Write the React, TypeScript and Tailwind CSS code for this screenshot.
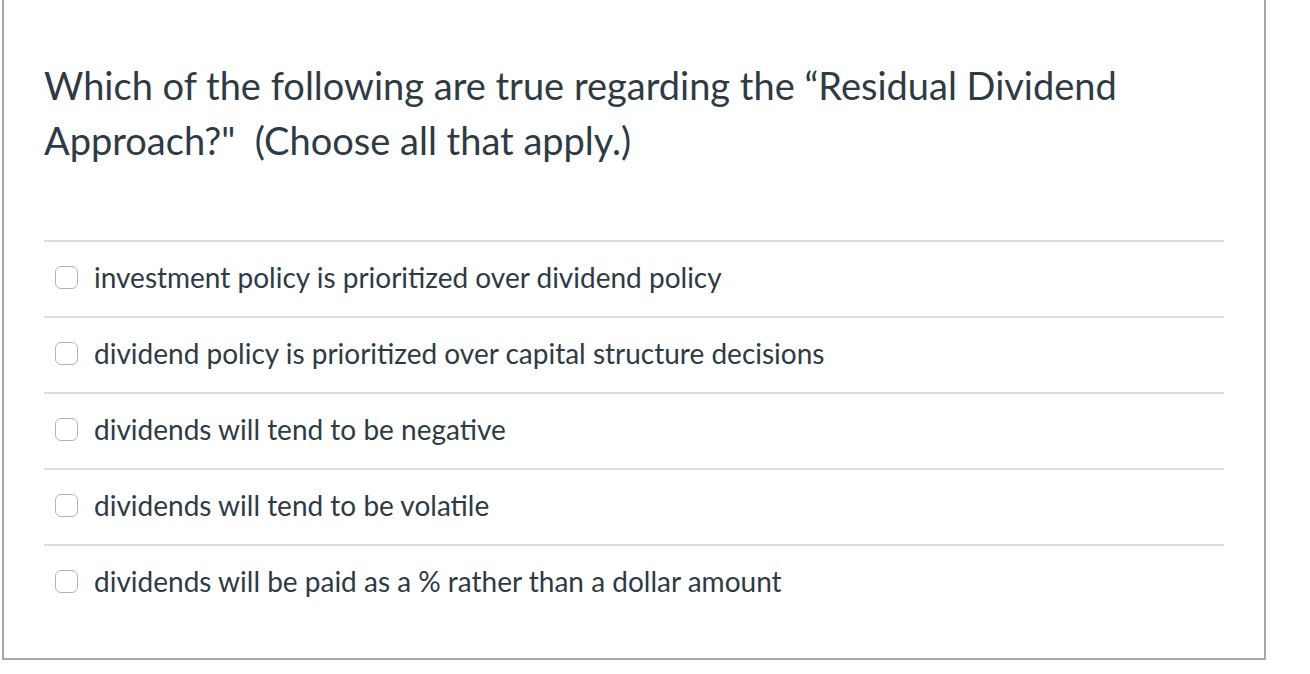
const OPTIONS = [
  'investment policy is prioritized over dividend policy',
  'dividend policy is prioritized over capital structure decisions',
  'dividends will tend to be negative',
  'dividends will tend to be volatile',
  'dividends will be paid as a % rather than a dollar amount',
];

export default function App() {
  return (
    <div className="h-[674px] w-[1310px] bg-white font-['Lato','Liberation_Sans',sans-serif] text-[#2d3b45]">
      <div className="ml-[2px] w-[1264px] border-x-2 border-b-2 border-[#a8a8a8] px-[40px] pb-[38px] pt-[58px]">
        <p className="text-[38px] leading-[55px]">
          Which of the following are true regarding the “Residual Dividend Approach?"&nbsp; (Choose all that apply.)
        </p>
        <div className="mt-[72px]">
          {OPTIONS.map((o) => (
            <label key={o} className="flex h-[76px] items-center border-t-2 border-[#dddddd] pb-[4px] pl-[11px]">
              <span className="h-[23px] w-[23px] shrink-0 rounded-[6px] border border-[#b4b4b4] bg-white" />
              <span className="ml-[16px] text-[28px] leading-[34px]">{o}</span>
            </label>
          ))}
        </div>
      </div>
    </div>
  );
}
